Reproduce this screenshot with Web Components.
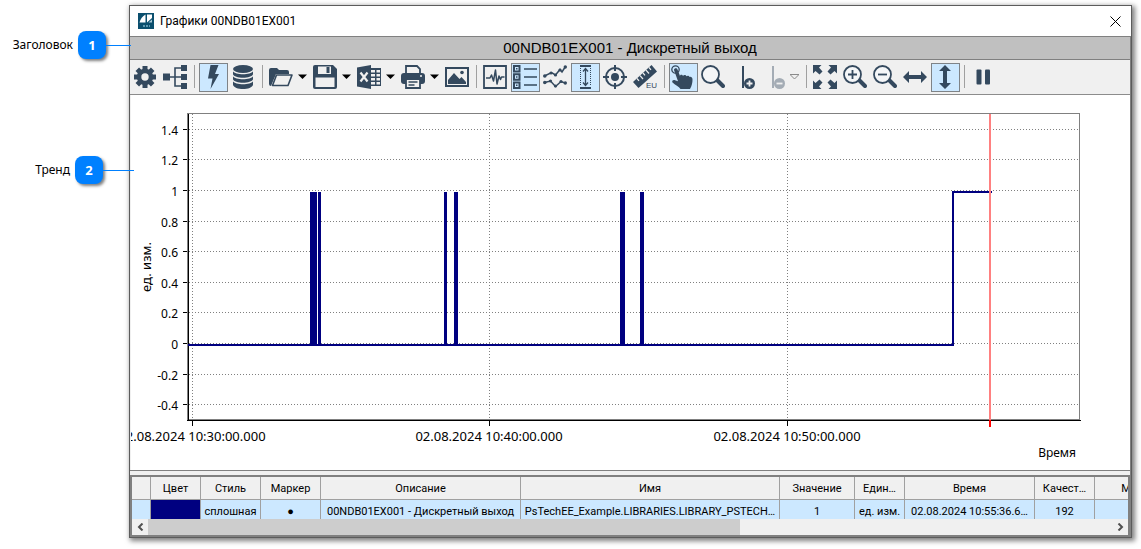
<!DOCTYPE html>
<html lang="ru">
<head>
<meta charset="utf-8">
<title>Графики 00NDB01EX001</title>
<style>
body { margin: 0; background: #fff; color: #000; font-family: "Noto Sans", sans-serif; font-size: 12px; }
</style>
</head>
<body>
<help-page></help-page>
<script>
const define = (name, html, setup) => customElements.define(name, class extends HTMLElement {
  connectedCallback() {
    if (this.shadowRoot) return;
    const t = document.createElement('template');
    t.innerHTML = html;
    this.attachShadow({ mode: 'open' }).append(t.content.cloneNode(true));
    if (setup) setup(this, this.shadowRoot);
  }
});

/* Icons are drawn on a 24 x 24 grid. */
const lens = '<path d="M16 15l6 6" stroke="currentColor" stroke-width="4" stroke-linecap="round"/><circle cx="9.5" cy="9.5" r="8.5" fill="#f4f6f8" stroke="currentColor" stroke-width="1.8"/>';
const ICONS = {
  gear: '<g stroke="currentColor" stroke-width="5"><path d="M12 1v22M1 12h22M4.3 4.3l15.4 15.4M19.7 4.3L4.3 19.7"/></g><circle cx="12" cy="12" r="8.2" fill="currentColor"/><circle cx="12" cy="12" r="3.7" fill="#f0f0f0"/>',
  tree: '<path fill="currentColor" d="M0 8.5h7v7H0zM18 0h6v6h-6zM18 9h6v6h-6zM18 18h6v6h-6z"/><path d="M7 12h11M18 3h-6v18h6" stroke="currentColor" stroke-width="1.6" fill="none"/>',
  bolt: '<path fill="currentColor" d="M9.5 0h8l-3.5 9h4L9.5 24l2-10.500H7z"/>',
  base: '<g fill="currentColor"><ellipse cx="12" cy="4" rx="10" ry="4"/><path d="M2 6.200c2 4 18 4 20 0v3c-1 4.600-19 4.600-20 0zM2 11.200c2 4 18 4 20 0v3c-1 4.600-19 4.600-20 0zM2 16.200c2 4 18 4 20 0v3.500c-1 5.700-19 5.700-20 0z"/></g>',
  folder: '<path fill="currentColor" d="M0 5q0-2 2-2h6l2 2h8q2 0 2 2v2H7L2 21q-2 0-2-2z"/><path d="M7.500 10h15.500l-4 10.500H3.500z" fill="#f0f0f0" stroke="currentColor" stroke-width="1.600" stroke-linejoin="round"/>',
  save: '<path fill="currentColor" d="M2 0h18l4 4v18q0 2-2 2H2q-2 0-2-2V2q0-2 2-2z"/><path fill="#f0f0f0" d="M5 1.500h13V9H5zM2.500 12.500h19V22h-19z"/><path fill="currentColor" d="M13.500 2h3v6h-3z"/>',
  excel: '<path fill="currentColor" d="M0 2.500L14 0v24L0 21.500zM14 3h10v18H14z"/><path d="M3.500 7.500l7 9M10.500 7.500l-7 9" stroke="#f0f0f0" stroke-width="2.200"/><path fill="#f0f0f0" d="M14 5h4v2.500h-4zM19.500 5H23v2.500h-3.500zM14 9h4v2.500h-4zM19.500 9H23v2.500h-3.500zM14 13h4v2.500h-4zM19.500 13H23v2.500h-3.500zM14 17h4v2.500h-4zM19.500 17H23v2.500h-3.500z"/>',
  print: '<path d="M5 8V1h11l3 3v4" fill="#f0f0f0" stroke="currentColor" stroke-width="1.800"/><rect y="8" width="24" height="11" rx="3" fill="currentColor"/><path d="M5 14h14v9H5z" fill="#f0f0f0" stroke="currentColor" stroke-width="1.800"/><path d="M7.500 17h9M7.500 20h6" stroke="currentColor" stroke-width="1.500"/><circle cx="20" cy="11" r="1" fill="#f0f0f0"/>',
  image: '<path fill="currentColor" d="M0 2h24v20H0z"/><path fill="#f0f0f0" d="M2 4h20v16H2z"/><path fill="currentColor" d="M3 19v-4l6-7 5.500 6 2-2 4.500 5v2z"/><circle cx="17" cy="7.500" r="1.800" fill="currentColor"/>',
  wave: '<path d="M1 1h22v22H1z" fill="#f0f0f0" stroke="currentColor" stroke-width="1.800"/><path d="M3 13h4l1.500-3 2 6L12.500 5 14 19l2-8 1.500 3.500L18.500 12H21.500" fill="none" stroke="currentColor" stroke-width="1.500" stroke-linejoin="round"/>',
  list: '<g fill="none" stroke="currentColor" stroke-width="2"><path d="M1 1h5.500v5.500H1zM1 9.200h5.500v5.500H1zM1 17.500h5.500V23H1z"/><path stroke-width="1.600" d="M11 4h13M11 12h13M11 20h13"/></g><path fill="currentColor" d="M3 3h1.500v1.500H3zM3 11.200h1.500v1.500H3zM3 19.500h1.500V21H3z"/>',
  trends: '<g fill="none" stroke="currentColor" stroke-width="1.500"><path d="M1.500 11l7-3.500 4 2.500 4.500-5.500 2 2.500 3.500-5.500M1.500 17.500l6-1.500 5 5.500 5.500-5 4 1.500"/></g><g fill="currentColor"><circle cx="1.800" cy="11" r="1.800"/><circle cx="8" cy="8" r="1.500"/><circle cx="12.500" cy="10" r="1.600"/><circle cx="17" cy="5" r="1.600"/><circle cx="22.300" cy="2" r="1.700"/><circle cx="1.800" cy="17.500" r="1.800"/><circle cx="7.500" cy="16" r="1.600"/><circle cx="12.500" cy="21" r="1.600"/><circle cx="18" cy="16.500" r="1.600"/><circle cx="22.300" cy="18" r="1.700"/></g>',
  fit: '<path d="M7 1h11M7 23h11" stroke="currentColor" stroke-width="2"/><path d="M7.500 3v18M17.500 3v18" stroke="currentColor" stroke-dasharray="1 1"/><path d="M12.500 4v16M10 6.500l2.500-3 2.500 3M10 17.500l2.500 3 2.500-3" fill="none" stroke="currentColor" stroke-width="1.300"/>',
  target: '<circle cx="12" cy="12" r="9" fill="none" stroke="currentColor" stroke-width="2"/><circle cx="12" cy="12" r="4" fill="currentColor"/><path d="M12 0v6M12 18v6M0 12h6M18 12h6" stroke="currentColor" stroke-width="2"/>',
  ruler: '<path fill="currentColor" d="M0 17L18.500 0 24 6.500 5.500 23z"/><path d="M4 13.500l2 2.300M7 10.700l3 3.300M10 8l2 2.300M13 5.200l3 3.300M16 2.500l2 2.300" stroke="#f0f0f0" stroke-width="1.200"/><text x="13" y="23" font-family="Liberation Sans, sans-serif" font-size="8" fill="currentColor">EU</text>',
  hand: '<circle cx="4.500" cy="4.500" r="3.700" fill="none" stroke="currentColor" stroke-width="1.300"/><path fill="currentColor" d="M3 5c0-2 3-2.300 3.500-.500L9 11c0-1.500 2.500-1.700 3 0 .500-1.500 3-1.300 3.500.300.800-1 2.500-.800 3 .700 1.500-.500 3 .500 3 2.500 0 3-.500 6-2.500 9.500H9.500C8 21.500 4 20 1.500 17.500.500 16 2 14.500 4 15.200l3 1z"/>',
  lens,
  lensIn: lens + '<path d="M5 9.500h9M9.500 5v9" stroke="currentColor" stroke-width="1.800"/>',
  lensOut: lens + '<path d="M5 9.500h9" stroke="currentColor" stroke-width="1.800"/>',
  markAdd: '<path d="M12 1v22" stroke="currentColor" stroke-width="2"/><circle cx="18.500" cy="18.500" r="5.500" fill="currentColor"/><path d="M15.500 18.500h6M18.500 15.500v6" stroke="#f0f0f0" stroke-width="1.800"/>',
  markDel: '<g opacity=".4"><path d="M12 1v22" stroke="currentColor" stroke-width="2"/><circle cx="18.500" cy="18.500" r="5.500" fill="currentColor"/></g><path d="M15.500 18.500h6" stroke="#f0f0f0" stroke-width="1.800"/>',
  expand: '<path fill="currentColor" d="M0 0h8.500L6 2.500l3.500 4-3 3-4-3.500L0 8.500zM24 0h-8.500L18 2.500l-3.500 4 3 3 4-3.500L24 8.500zM0 24h8.500L6 21.500l3.500-4-3-3-4 3.500L0 15.500zM24 24h-8.500l2.500-2.500-3.500-4 3-3 4 3.500 2.500-2.500z"/>',
  horz: '<path fill="currentColor" d="M0 12l6-6v4h12V6l6 6-6 6v-4H6v4z"/>',
  vert: '<path fill="currentColor" d="M12 0l6 6h-4v12h4l-6 6-6-6h4V6H6z"/>',
  pause: '<rect x="5.500" y="4.500" width="5" height="15" rx="1" fill="currentColor"/><rect x="14" y="4.500" width="5" height="15" rx="1" fill="currentColor"/>'
};

define('tool-button', `
<style>
  :host { display: block; }
  button { display: flex; align-items: center; box-sizing: border-box; height: 29px; margin: 0; padding: 1px 2px 2px 1px; border: 1px solid transparent; background: none; color: #34495e; }
  :host([pressed]) button { border-color: #7f8387; background: #cce8ff; }
  svg { display: block; }
  .caret { display: none; margin: 0 0 0 5px; }
  :host([split]) .caret { display: block; }
</style>
<button type="button"><svg class="icon" width="24" height="24" viewBox="0 0 24 24" fill="none"></svg>
<svg class="caret" width="9" height="6" viewBox="0 0 9 6"><path d="M0 .5h9L4.500 5z"/></svg></button>`,
(host, root) => {
  root.querySelector('.icon').innerHTML = ICONS[host.getAttribute('icon')];
  const b = root.querySelector('button');
  b.setAttribute('aria-label', host.getAttribute('label'));
  if (host.hasAttribute('pressed')) b.setAttribute('aria-pressed', 'true');
  if (host.getAttribute('split') === 'off') {
    b.disabled = true;
    const p = root.querySelector('.caret path');
    p.setAttribute('fill', 'none');
    p.setAttribute('stroke', '#8a8a8a');
  }
});

define('tool-bar', `
<style>
  :host { display: flex; gap: 1px; padding: 3px 1px 2px; background: #f0f0f0; border-bottom: 1px solid #8c8c8c; overflow: hidden; }
  i { flex: none; width: 1px; height: 23px; margin: 2px 3px; background: #a0a0a0; }
</style>
<tool-button icon="gear" label="Настройки"></tool-button>
<tool-button icon="tree" label="Дерево"></tool-button><i></i>
<tool-button icon="bolt" label="Онлайн" pressed></tool-button>
<tool-button icon="base" label="История"></tool-button><i></i>
<tool-button icon="folder" label="Открыть" split></tool-button>
<tool-button icon="save" label="Сохранить" split></tool-button>
<tool-button icon="excel" label="Экспорт" split></tool-button>
<tool-button icon="print" label="Печать" split></tool-button>
<tool-button icon="image" label="Изображение"></tool-button><i></i>
<tool-button icon="wave" label="Сигнал"></tool-button>
<tool-button icon="list" label="Легенда" pressed></tool-button>
<tool-button icon="trends" label="Тренды"></tool-button>
<tool-button icon="fit" label="Масштаб шкалы" pressed></tool-button>
<tool-button icon="target" label="Центр"></tool-button>
<tool-button icon="ruler" label="Единицы"></tool-button><i></i>
<tool-button icon="hand" label="Перемещение" pressed></tool-button>
<tool-button icon="lens" label="Лупа"></tool-button>
<tool-button icon="markAdd" label="Добавить метку"></tool-button>
<tool-button icon="markDel" label="Удалить метку" split="off"></tool-button><i></i>
<tool-button icon="expand" label="Показать всё"></tool-button>
<tool-button icon="lensIn" label="Увеличить"></tool-button>
<tool-button icon="lensOut" label="Уменьшить"></tool-button>
<tool-button icon="horz" label="По горизонтали"></tool-button>
<tool-button icon="vert" label="По вертикали" pressed></tool-button><i></i>
<tool-button icon="pause" label="Пауза"></tool-button>`);

define('title-bar', `
<style>
  :host { display: flex; align-items: center; height: 30px; padding: 0 8px; background: #fff; font-family: Roboto, "Noto Sans", sans-serif; }
  svg { display: block; flex: none; }
  span { flex: 1; margin-left: 6px; }
  button { padding: 2px; border: 0; background: none; }
</style>
<svg width="16" height="16" viewBox="0 0 16 16"><path fill="#0b4f6e" d="M0 0h16v16H0z"/><path fill="#fff" d="M1.500 9.500Q3 4 7.500 1.500v8zM9 1.500h5V5L9 9.500z"/><path d="M10.500 9.500L14 6.500v3z" fill="#a8c8d6"/><path stroke="#5f9ab2" stroke-width="2" stroke-dasharray="2 1" d="M5 13h7"/></svg>
<span><slot></slot></span>
<button type="button" aria-label="Закрыть"><svg width="11" height="11" viewBox="0 0 11 11"><path d="M.5.500l10 10M10.500.500l-10 10" stroke="#000"/></svg></button>`);

define('trend-chart', `
<style>
  :host { display: grid; grid-template-columns: 56px minmax(0, 1fr) 50px; grid-template-rows: 18px 308px 49px; background: #fff; overflow: hidden; font-family: "Noto Sans", sans-serif; font-size: 13px; }
  .plot { grid-area: 2 / 2; display: block; width: 100%; height: 308px; overflow: visible; }
  .unit { grid-area: 2 / 1; justify-self: start; align-self: center; margin-left: 8px; writing-mode: vertical-rl; transform: rotate(180deg); line-height: 14px; }
  .time { grid-area: 3 / 1 / 4 / 3; justify-self: end; align-self: end; margin: 0 4px 9px; font-size: 12px; line-height: 16px; }
</style>
<span class="unit">ед. изм.</span>
<svg class="plot" role="img" aria-label="Тренд"></svg>
<span class="time">Время</span>`,
(host, root) => {
  /* 893 x 308 plot units; horizontal positions scale with the width. */
  const W = 893, x = v => (v / W * 100) + '%';
  const line = (x1, y1, x2, y2, extra) => `<line x1="${x1}" y1="${y1}" x2="${x2}" y2="${y2}" ${extra}/>`;
  const grid = 'stroke="#808080" stroke-dasharray="1 2"';
  let s = '<g shape-rendering="crispEdges">', t = '';
  [['1.4', 16], ['1.2', 46], ['1', 77], ['0.8', 108], ['0.6', 138], ['0.4', 169], ['0.2', 199], ['0', 230], ['-0.2', 261], ['-0.4', 291]].forEach(([n, y]) => {
    s += line(2, y + .5, '100%', y + .5, grid) + line(-4, y + .5, 1, y + .5, 'stroke="#000"');
    t += `<text x="-9" y="${y + 6}" font-size="12" text-anchor="end">${n}</text>`;
  });
  [['30', 5], ['40', 302], ['50', 600]].forEach(([m, v]) => {
    s += line(x(v + .5), 1, x(v + .5), 306, grid) + line(x(v + .5), 307, x(v + .5), 313, 'stroke="#000"');
    t += `<text x="${x(v)}" y="328" text-anchor="middle">02.08.2024 10:${m}:00.000</text>`;
  });
  s += line(0, .5, '100%', .5, 'stroke="#808080"') + line(x(892.5), 0, x(892.5), 307, 'stroke="#808080"')
    + line(0, 306.5, '100%', 306.5, 'stroke="#808080"') + line(.5, 0, .5, 307, 'stroke="#808080"')
    + line(1.5, 1, 1.5, 308, 'stroke="#000"') + line(0, 307.5, x(894), 307.5, 'stroke="#000"');
  const bars = [[123, 7], [131, 3], [257, 3], [267, 4], [433, 5], [453, 4]]
    .map(([l, w]) => `<rect x="${l}" y="79" width="${w}" height="153" fill="#000080"/>`).join('');
  s += `<svg width="100%" height="308" viewBox="0 0 ${W} 308" preserveAspectRatio="none">${bars}<path d="M1 232H766V79H805" fill="none" stroke="#000080" stroke-width="2" vector-effect="non-scaling-stroke"/></svg>`
    + line(x(803), 1, x(803), 307, 'stroke="#ff8080" stroke-width="2"') + line(x(803), 307, x(803), 314, 'stroke="#f00" stroke-width="2"') + '</g>';
  root.querySelector('.plot').innerHTML = s + t;
});

define('signal-table', `
<style>
  :host { display: block; border: 2px solid #808080; background: #f0f0f0; font-family: Roboto, "Noto Sans", sans-serif; font-size: 11px; }
  .view { height: 42px; overflow: hidden; }
  table { width: 1026px; table-layout: fixed; border-collapse: separate; border-spacing: 0; }
  th, td { box-sizing: border-box; height: 23px; padding: 1px 2px 0; border-right: 1px solid #a0a0a0; text-align: center; font-weight: normal; line-height: 16px; white-space: nowrap; overflow: hidden; text-overflow: ellipsis; }
  th { border-bottom: 1px solid #a0a0a0; }
  td { background: #cce8ff; }
  td.color { background: #000080; }
  .bar { display: flex; align-items: center; height: 16px; background: #f0f0f0; }
  .bar button { display: flex; justify-content: center; width: 16px; padding: 0; border: 0; background: none; }
  .track { flex: 1; align-self: stretch; }
  .thumb { width: 61.4%; height: 100%; background: #cdcdcd; }
</style>
<div class="view"><table>
<colgroup><col style="width:19px"><col style="width:50px"><col style="width:60px"><col style="width:60px"><col style="width:200px"><col style="width:259px"><col style="width:75px"><col style="width:50px"><col style="width:130px"><col style="width:60px"><col style="width:63px"></colgroup>
<thead><tr><th></th><th>Цвет</th><th>Стиль</th><th>Маркер</th><th>Описание</th><th>Имя</th><th>Значение</th><th>Един…</th><th>Время</th><th>Качест…</th><th>М</th></tr></thead>
<tbody><tr><td></td><td class="color"></td><td>сплошная</td><td>●</td><td>00NDB01EX001 - Дискретный выход</td><td>PsTechEE_Example.LIBRARIES.LIBRARY_PSTECH…</td><td>1</td><td>ед. изм.</td><td>02.08.2024 10:55:36.6…</td><td>192</td><td></td></tr></tbody>
</table></div>
<div class="bar">
<button type="button" aria-label="Влево"><svg width="7" height="8" viewBox="0 0 7 8"><path d="M5.500.500L2 4l3.500 3.500" fill="none" stroke="#505050" stroke-width="2"/></svg></button>
<div class="track"><div class="thumb"></div></div>
<button type="button" aria-label="Вправо"><svg width="7" height="8" viewBox="0 0 7 8"><path d="M1.500.500L5 4 1.500 7.500" fill="none" stroke="#505050" stroke-width="2"/></svg></button>
</div>`);

define('trend-window', `
<style>
  :host { display: block; border: 1px solid #5c5c5c; background: #f0f0f0; box-shadow: 2px 2px 5px 1px rgba(0, 0, 0, .5); }
  .body { border: 1px solid #808080; border-width: 0 1px 0 0; }
  h1 { margin: 0; border: 1px solid #808080; border-width: 1px 0; background: #c0c0c0; font: 15px/22px "Liberation Sans", sans-serif; text-align: center; }
  trend-chart { margin-left: 1px; }
  signal-table { margin-top: 4px; }
  .split { border-bottom: 1px solid #808080; }
</style>
<title-bar>Графики 00NDB01EX001</title-bar>
<div class="body">
<h1>00NDB01EX001 - Дискретный выход</h1>
<tool-bar></tool-bar>
<div class="split"><trend-chart></trend-chart></div>
<signal-table></signal-table>
</div>`);

define('help-callout', `
<style>
  :host { display: flex; align-items: center; justify-content: flex-end; gap: 5px; line-height: 16px; }
  b { position: relative; display: block; width: 28px; border-radius: 8px; background: #0080ff; box-shadow: 2px 2px 3px rgba(0, 0, 0, .5); color: #fff; font-size: 13px; line-height: 28px; text-align: center; }
  b::after { content: ""; position: absolute; top: 14px; left: 100%; width: var(--reach); height: 1px; background: #0080ff; }
</style>
<span><slot></slot></span><b><slot name="number"></slot></b>`);

define('help-page', `
<style>
  :host { display: grid; grid-template-columns: 129px minmax(0, 1fr); padding: 5px 9px 11px 0; }
  aside { position: relative; z-index: 1; display: flex; flex-direction: column; gap: 97px; padding-top: 26px; }
  .head { --reach: 25px; padding-right: 23px; }
  .trend { --reach: 31px; padding-right: 26px; }
</style>
<aside>
<help-callout class="head">Заголовок<span slot="number">1</span></help-callout>
<help-callout class="trend">Тренд<span slot="number">2</span></help-callout>
</aside>
<trend-window></trend-window>`);
</script>
</body>
</html>
